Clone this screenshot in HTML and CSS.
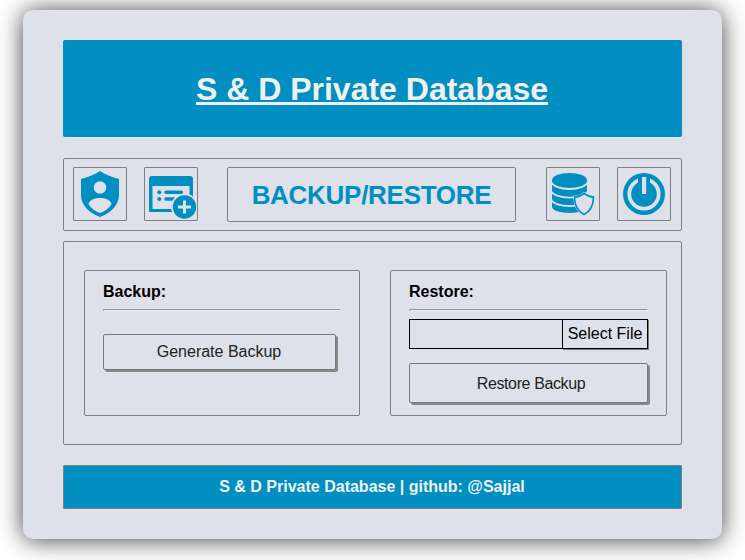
FILE: index.html
```html
<!DOCTYPE html>
<html lang="en">
<head>
<meta charset="utf-8">
<title>S &amp; D Private Database</title>
<link rel="stylesheet" href="styles.css">
</head>
<body>
<div class="card">
  <header class="banner"><h1><span>S &amp; D Private Database</span></h1></header>
  <nav class="toolbar">
    <a class="tool" title="Account">
      <svg width="52" height="52" viewBox="0 0 52 52"><path fill="#008fc0" d="M26 3C32 7 38 9 45 11V27C45 37 37 45 26 49C15 45 7 37 7 27V11C14 9 20 7 26 3Z"/><circle cx="26" cy="19.500" r="6.200" fill="#dee1e9"/><path fill="#dee1e9" d="M14.500 36C16 31.500 21 30 26 30S36 31.500 37.500 36C35 40 31 43.500 26 45C21 43.500 17 40 14.500 36Z"/></svg>
    </a>
    <a class="tool" title="New record">
      <svg width="52" height="52" viewBox="0 0 52 52"><path fill="#008fc0" fill-rule="evenodd" d="M7 8H45Q48 8 48 11V44H4V11Q4 8 7 8ZM7.500 18V41H44.500V18Z"/><circle cx="14.300" cy="24.300" r="2" fill="#008fc0"/><circle cx="14.300" cy="31" r="2" fill="#008fc0"/><path stroke="#008fc0" stroke-width="3.400" stroke-linecap="round" d="M21 24.300H36.500M21 31H29"/><circle cx="39.500" cy="39" r="13.500" fill="#dee1e9"/><circle cx="39.500" cy="39" r="11.700" fill="#008fc0"/><path stroke="#dee1e9" stroke-width="3" d="M39.500 32.500V45.500M33 39H46"/></svg>
    </a>
    <h2 class="page-title"><span>BACKUP/RESTORE</span></h2>
    <a class="tool tool-backup" title="Backup">
      <svg width="52" height="52" viewBox="0 0 52 52"><path fill="#008fc0" d="M5 12.500V38.500C5 47 40 47 40 38.500V12.500Z"/><ellipse cx="22.500" cy="12.200" rx="17.500" ry="7.200" fill="#008fc0"/><path fill="none" stroke="#dee1e9" stroke-width="1.800" d="M4 13.500C7 23.500 38 23.500 41 13.500M4 22.500C7 32 38 32 41 22.500M4 31C7 40.500 38 40.500 41 31"/><path fill="#dee1e9" stroke="#dee1e9" stroke-width="2.500" d="M37 25.500Q42 29 47 29C47 37 44 43 37 47C30 43 27.500 37 27.500 29Q32.500 29 37 25.500Z"/><path fill="#dee1e9" stroke="#008fc0" stroke-width="1.700" d="M37 25.500Q42 29 46.500 29C46.500 37 44 43 37 46.500C30 43 27.500 37 27.500 29Q32.500 29 37 25.500Z"/></svg>
    </a>
    <a class="tool" title="Log out">
      <svg width="52" height="52" viewBox="0 0 52 52"><circle cx="26" cy="26" r="21" fill="#008fc0"/><circle cx="26" cy="26" r="14.700" fill="none" stroke="#dee1e9" stroke-width="3.800"/><path fill="#008fc0" d="M20 7H32V16H20Z"/><path fill="#dee1e9" d="M24 9H28.200V26H24Z"/></svg>
    </a>
  </nav>
  <main class="panels">
    <section class="panel">
      <h3><span class="label-backup">Backup:</span></h3>
      <hr>
      <button class="action generate"><span class="generate-text">Generate Backup</span></button>
    </section>
    <section class="panel panel-restore">
      <h3><span class="label-restore">Restore:</span></h3>
      <hr>
      <div class="file"><div class="file-name"></div><button class="select"><span class="select-text">Select File</span></button></div>
      <button class="action restore"><span class="restore-text">Restore Backup</span></button>
    </section>
  </main>
  <footer class="footer"><span>S &amp; D Private Database | github: @Sajjal</span></footer>
</div>
</body>
</html>
```
FILE: styles.css
```css
* { box-sizing: border-box; }
body { margin: 0; padding: 10px 23px; height: 560px; overflow: hidden; background: #fff; font-family: "Liberation Sans", Arial, sans-serif; font-size: 16px; color: #000; }
.card { width: 699px; height: 529px; padding: 30px 40px; background: #dee1e9; border-radius: 10px; box-shadow: 0 1px 25px 0 rgba(0, 0, 0, .75); }
h1, h2, h3 { margin: 0; }
.banner { height: 97px; padding-right: 1px; display: flex; align-items: center; justify-content: center; background: #008fc0; border-radius: 2px; }
h1 { font-size: 32px; line-height: 36px; color: #f0f0f0; text-decoration: underline; text-decoration-thickness: 3px; text-underline-offset: 2px; text-decoration-skip-ink: none; }
.toolbar { height: 73px; margin-top: 21px; padding: 8px 10px 8px 9px; display: flex; align-items: flex-start; border: 1px solid gray; border-radius: 2px; }
.tool { width: 54px; height: 54px; border: 1px solid gray; border-radius: 1px; }
.tool + .tool { margin-left: 17px; }
.tool svg { display: block; }
.page-title { width: 289px; height: 55px; margin-left: 29px; padding-top: 1px; display: flex; align-items: center; justify-content: center; border: 1px solid gray; border-radius: 2px; color: #008fc0; font-size: 26px; letter-spacing: -.28px; }
.tool-backup { margin-left: 30px; }
.panels { height: 204px; margin-top: 10px; padding: 28px 14px 28px 20px; display: flex; gap: 30px; border: 1px solid gray; border-radius: 2px; }
.panel { width: 276px; height: 146px; padding: 12px 18px; border: 1px solid gray; border-radius: 2px; }
.panel-restore { width: 277px; }
h3 { font-size: 16px; line-height: 18px; }
hr { height: 2px; margin: 8px 0 0; border: 1px solid; border-color: #959595 #eee #eee #959595; }
button { padding: 0; background: #dee1e9; font: inherit; display: flex; align-items: center; justify-content: center; }
.action { border: 1px solid #777; border-radius: 2px; box-shadow: 2px 2px 0 #888; color: #222; }
.generate { width: 233px; height: 36px; margin-top: 23px; padding-right: 1px; }
.file { width: 239px; height: 30px; margin-top: 8px; display: flex; border: 1px solid #000; }
.file-name { flex: 1; }
.select { width: 86px; height: 30px; margin: -1px; border: 1px solid #000; box-shadow: 1px 1px 0 #777; color: #000; }
.restore { width: 239px; height: 40px; margin-top: 14px; padding: 2px 0 0 5px; }
.restore-text { letter-spacing: -.38px; }
.footer { height: 44px; margin-top: 20px; padding-right: 1px; display: flex; align-items: center; justify-content: center; background: #008fc0; border: 1px solid gray; border-radius: 1px; color: #f0f0f0; font-weight: bold; }
```
